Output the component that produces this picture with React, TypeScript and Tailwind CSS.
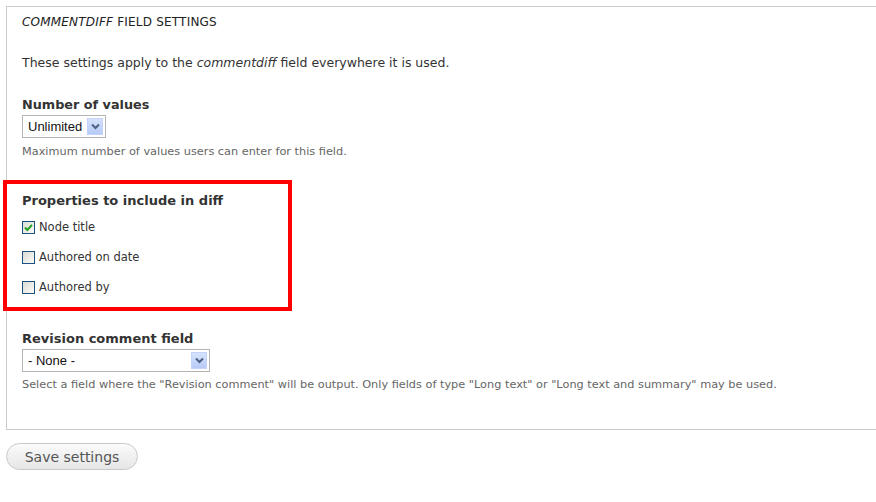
import React from 'react';

function Checkbox({ checked }: { checked?: boolean }) {
  return (
    <span className="w-[13px] h-[13px] border border-[#1c5180] bg-gradient-to-br from-[#dcdcd5] to-[#fbfbf9] flex items-center justify-center shrink-0">
      {checked && (
        <svg width="9" height="9" viewBox="0 0 9 9">
          <path d="M1 4.5 L3.3 7 L8 1.8" fill="none" stroke="#21a121" strokeWidth="2" />
        </svg>
      )}
    </span>
  );
}

function Select({ value, width }: { value: string; width: string }) {
  return (
    <div className={`${width} h-[23px] border border-[#b5b5b5] bg-white flex items-center justify-between pl-[5px] pr-[2px]`}>
      <span className="text-[13px] text-[#111] font-['Liberation_Sans',Arial,sans-serif]">{value}</span>
      <span className="w-[16px] h-[17px] bg-gradient-to-b from-[#d7e3fd] to-[#b7cbf6] border border-[#c3d3fd] flex items-center justify-center">
        <svg width="9" height="7" viewBox="0 0 9 7">
          <path d="M1 1.5 L4.5 5 L8 1.5" fill="none" stroke="#4d6185" strokeWidth="2" />
        </svg>
      </span>
    </div>
  );
}

export default function App() {
  return (
    <div className="w-[876px] h-[502px] bg-white overflow-hidden relative font-['DejaVu_Sans',Verdana,sans-serif] text-[#333] leading-[16px]">
      <div className="pt-[6px] pl-[6px]">
        <div className="w-[900px] h-[424px] border-t border-l border-b border-[#cccccc] pl-[15px] pt-[7px]">
          <div className="text-[12px] text-[#222] uppercase tracking-[0.2px]">
            <em>commentdiff</em> field settings
          </div>

          <p className="mt-[25px] text-[12.5px]">
            These settings apply to the <em>commentdiff</em> field everywhere it is used.
          </p>

          <div className="mt-[26px]">
            <div className="text-[12.8px] font-bold">Number of values</div>
            <div className="mt-[2px]">
              <Select value="Unlimited" width="w-[84px]" />
            </div>
            <div className="mt-[6px] text-[11.3px] text-[#666]">Maximum number of values users can enter for this field.</div>
          </div>

          <div className="mt-[33px]">
            <div className="text-[13px] font-bold">Properties to include in diff</div>
            <div className="mt-[10px] flex flex-col gap-[14px]">
              {[
                ['Node title', true],
                ['Authored on date', false],
                ['Authored by', false],
              ].map(([label, checked]) => (
                <label key={label as string} className="h-[16px] flex items-center gap-[4px] text-[11.5px]">
                  <Checkbox checked={checked as boolean} />
                  {label}
                </label>
              ))}
            </div>
          </div>

          <div className="mt-[36px]">
            <div className="text-[13px] font-bold">Revision comment field</div>
            <div className="mt-[2px]">
              <Select value="- None -" width="w-[188px]" />
            </div>
            <div className="mt-[5px] text-[11.3px] text-[#666]">
              Select a field where the "Revision comment" will be output. Only fields of type "Long text" or "Long text and summary" may be used.
            </div>
          </div>
        </div>

        <button className="mt-[13px] w-[132px] h-[27px] rounded-full border border-[#c8c8c8] bg-gradient-to-b from-[#fbfbfb] to-[#e6e6e6] text-[14px] text-[#555] font-['DejaVu_Sans',Verdana,sans-serif]">
          Save settings
        </button>
      </div>

      <div className="absolute left-[3px] top-[180px] w-[289px] h-[131px] border-[4px] border-[#ff0000] pointer-events-none" />
    </div>
  );
}
